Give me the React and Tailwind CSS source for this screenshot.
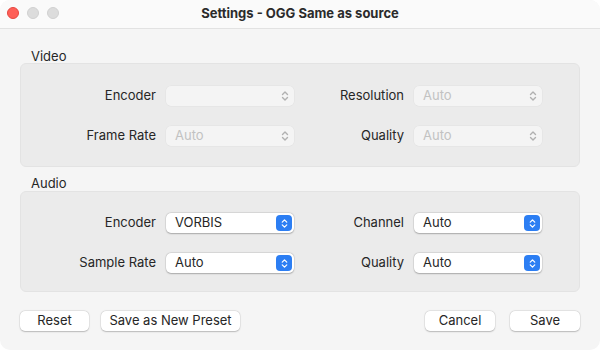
import React from 'react';

const font = { fontFamily: 'Inter, "Noto Sans", "Liberation Sans", sans-serif' };

const Chevrons = ({ className }) => (
  <svg viewBox="0 0 10 14" className={className} fill="none" stroke="currentColor" strokeWidth="1.4" strokeLinecap="round" strokeLinejoin="round">
    <path d="M2.5 5.5 L5 3 L7.5 5.5" />
    <path d="M2.5 8.5 L5 11 L7.5 8.5" />
  </svg>
);

const Select = ({ value, disabled }) => {
  if (disabled) {
    return (
      <div className="w-[128px] h-[20px] rounded-[5px] bg-[#f4f4f4] shadow-[0_0_0_0.5px_rgba(0,0,0,0.04)] flex items-center justify-between pl-[9px] pr-[4px]">
        <span className="text-[13px] text-[#c2c2c2]">{value}</span>
        <Chevrons className="w-[10px] h-[14px] text-[#b0b0b0]" />
      </div>
    );
  }
  return (
    <div className="w-[128px] h-[20px] rounded-[5px] bg-white shadow-[0_0.5px_1.5px_rgba(0,0,0,0.25),0_0_0_0.5px_rgba(0,0,0,0.08)] flex items-center justify-between pl-[9px] pr-[2px]">
      <span className="text-[13px] text-[#262626]">{value}</span>
      <div className="w-[16px] h-[16px] rounded-[4px] bg-[#2c7ef3] flex items-center justify-center">
        <Chevrons className="w-[9px] h-[13px] text-white" />
      </div>
    </div>
  );
};

const Row = ({ l1, v1, l2, v2, disabled }) => (
  <div className="flex items-center h-[20px]">
    <div className="w-[135px] text-right text-[13px] text-[#262626]">{l1}</div>
    <div className="ml-[10px]"><Select value={v1} disabled={disabled} /></div>
    <div className="w-[110px] text-right text-[13px] text-[#262626]">{l2}</div>
    <div className="ml-[10px]"><Select value={v2} disabled={disabled} /></div>
  </div>
);

const Group = ({ title, children, className, boxClass }) => (
  <div className={className}>
    <div className="pl-[11px] text-[13px] text-[#262626] leading-[14px]">{title}</div>
    <div className={`rounded-[6px] bg-[#ebebeb] border border-[#e3e3e3] flex flex-col gap-[20px] ${boxClass}`}>
      {children}
    </div>
  </div>
);

const Button = ({ children, className }) => (
  <button className={`h-[20px] rounded-[5px] bg-white text-[13px] text-[#262626] shadow-[0_0.5px_1.5px_rgba(0,0,0,0.22),0_0_0_0.5px_rgba(0,0,0,0.07)] ${className}`}>
    {children}
  </button>
);

export default function App() {
  return (
    <div className="w-[600px] h-[350px] bg-white" style={font}>
      <div className="w-full h-full rounded-[10px] bg-[#f5f5f5] overflow-hidden flex flex-col">
        <div className="h-[29px] shrink-0 bg-[#fafafa] border-b border-[#e2e2e2] flex items-center relative">
          <div className="absolute left-[7px] top-[7px] flex gap-[8px]">
            <div className="w-[12px] h-[12px] rounded-full bg-[#fe5f57] border border-[#e5473f]" />
            <div className="w-[12px] h-[12px] rounded-full bg-[#dcdcdc] border border-[#d0d0d0]" />
            <div className="w-[12px] h-[12px] rounded-full bg-[#dcdcdc] border border-[#d0d0d0]" />
          </div>
          <div className="w-full text-center text-[13px] font-bold text-[#2b2b2b]">Settings - OGG Same as source</div>
        </div>

        <div className="px-[20px]">
          <Group title="Video" className="mt-[20px]" boxClass="pt-[22px] pb-[20px]">
            <Row l1="Encoder" v1="" l2="Resolution" v2="Auto" disabled />
            <Row l1="Frame Rate" v1="Auto" l2="Quality" v2="Auto" disabled />
          </Group>

          <Group title="Audio" className="mt-[9px]" boxClass="mt-[1px] pt-[21px] pb-[18px]">
            <Row l1="Encoder" v1="VORBIS" l2="Channel" v2="Auto" />
            <Row l1="Sample Rate" v1="Auto" l2="Quality" v2="Auto" />
          </Group>

          <div className="mt-[19px] flex items-center">
            <Button className="w-[69px]">Reset</Button>
            <Button className="w-[139px] ml-[12px]">Save as New Preset</Button>
            <div className="flex-1" />
            <Button className="w-[70px]">Cancel</Button>
            <Button className="w-[70px] ml-[15px]">Save</Button>
          </div>
        </div>
      </div>
    </div>
  );
}
